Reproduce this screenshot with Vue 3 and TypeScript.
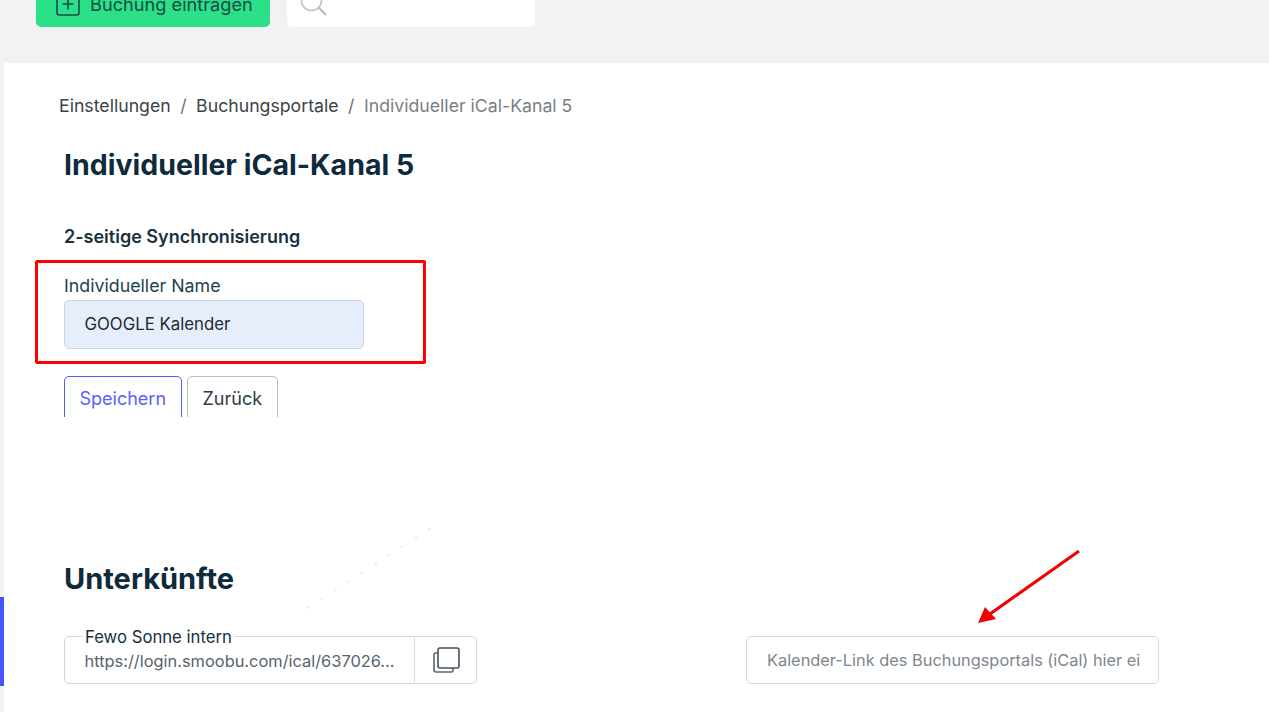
<script setup lang="ts">
const crumbs: string[] = ['Einstellungen', 'Buchungsportale']
const current = 'Individueller iCal-Kanal 5'
</script>

<template>
  <div class="page">
    <aside class="rail"><span class="rail-mark"></span></aside>
    <main class="main">
      <header class="topbar">
        <button class="book" type="button">
          <svg class="book-icon" width="24" height="24" viewBox="0 0 24 24" fill="none">
            <rect x="1" y="1" width="22" height="22" rx="2" stroke="#1c4a45" stroke-width="1.6" />
            <path d="M12 6.5v11M6.500 12h11" stroke="#1c4a45" stroke-width="1.6" />
          </svg>
          <span>Buchung eintragen</span>
        </button>
        <div class="search">
          <svg width="30" height="30" viewBox="0 0 30 30" fill="none">
            <circle cx="12.5" cy="12.5" r="10" stroke="#c4c4c4" stroke-width="1.6" />
            <path d="M20 20l7 7" stroke="#b5b5b5" stroke-width="1.8" />
          </svg>
        </div>
      </header>

      <section class="content">
        <nav class="crumbs">
          <template v-for="c in crumbs" :key="c">
            <span>{{ c }}</span><span class="sep">/</span>
          </template>
          <span class="current">{{ current }}</span>
        </nav>
        <h1 class="title">{{ current }}</h1>
        <h2 class="sub">2-seitige Synchronisierung</h2>

        <div class="redbox">
          <label class="name-label">Individueller Name</label>
          <div class="name-input">GOOGLE Kalender</div>
        </div>

        <div class="actions">
          <button class="btn primary" type="button">Speichern</button>
          <button class="btn" type="button">Zurück</button>
        </div>

        <h2 class="section">Unterkünfte</h2>

        <div class="row">
          <div class="link-field">
            <span class="legend">Fewo Sonne intern</span>
            <span class="url">https://login.smoobu.com/ical/637026...</span>
            <span class="copy">
              <svg width="28" height="28" viewBox="0 0 28 28" fill="none">
                <path d="M6 7H3.500A1.500 1.500 0 0 0 2 8.500V24a2 2 0 0 0 2 2h15.500a1.500 1.500 0 0 0 1.500-1.500V22" stroke="#5b6670" stroke-width="1.600" />
                <rect x="6" y="2" width="21" height="20" rx="2" stroke="#46525c" stroke-width="1.600" />
              </svg>
            </span>
          </div>
          <div class="ical-input">Kalender-Link des Buchungsportals (iCal) hier ei</div>
        </div>
      </section>
    </main>

    <svg class="marks" width="1269" height="712" viewBox="0 0 1269 712" fill="none">
      <path d="M431 528 L297 615" stroke="#f6caca" stroke-width="0.8" stroke-dasharray="4 12" />
      <path d="M1079 551 L990 614" stroke="#f00000" stroke-width="3" />
      <path d="M978 623 L985 607 L996 619 Z" fill="#f00000" />
    </svg>
  </div>
</template>

<style>
html, body { margin: 0; background: #fff; }
</style>

<style scoped>
.page {
  position: relative;
  display: flex;
  width: 1269px;
  height: 712px;
  overflow: hidden;
  background: #fff;
  font-family: Inter, "Liberation Sans", sans-serif;
  color: #1f2d36;
}
.rail {
  flex: 0 0 4px;
  display: flex;
  flex-direction: column;
  padding-top: 597px;
  background: #f2f2f2;
  box-sizing: border-box;
}
.rail-mark { display: block; height: 89px; background: #4353ff; }
.main { flex: 1; min-width: 0; }
.topbar {
  display: flex;
  gap: 17px;
  height: 63px;
  padding-left: 32px;
  background: #f2f2f2;
  box-sizing: border-box;
}
.book {
  display: flex;
  align-items: center;
  gap: 10px;
  height: 47px;
  margin-top: -20px;
  width: 234px;
  padding: 0 0 0 20px;
  border: 0;
  border-radius: 5px;
  background: #2ae089;
  color: #1c4a45;
  font: 400 18.200px Inter, "Liberation Sans", sans-serif;
  box-sizing: border-box;
}
.book-icon { flex: none; }
.search {
  display: flex;
  align-items: flex-start;
  width: 248px;
  height: 47px;
  margin-top: -20px;
  padding: 8px 0 0 12px;
  background: #fff;
  border-radius: 5px;
  box-sizing: border-box;
}
.content { padding: 30px 0 0 31px; }
.crumbs {
  display: flex;
  padding-left: 24px;
  height: 24px;
  align-items: center;
  font-size: 17.700px;
  color: #3b434a;
}
.sep { margin: 0 9.500px; color: #6b7378; }
.current { color: #787f85; }
.title {
  margin: 31px 0 0 29px;
  font-size: 28.500px;
  line-height: 34px;
  font-weight: 700;
  color: #0e2a3b;
}
.sub {
  margin: 44px 0 0 29px;
  font-size: 18px;
  line-height: 22px;
  font-weight: 600;
  color: #1a3140;
}
.redbox {
  width: 391px;
  height: 104px;
  margin-top: 12px;
  padding: 12px 26px 0;
  border: 3px solid #f00;
  border-radius: 2px;
  box-sizing: border-box;
}
.name-label { display: block; font-size: 17.800px; line-height: 22px; color: #25404f; }
.name-input {
  width: 300px;
  height: 49px;
  margin-top: 3px;
  padding: 0 0 2px 19.500px;
  display: flex;
  align-items: center;
  background: #e7eefb;
  border: 1px solid #cdd6e2;
  border-radius: 5px;
  font-size: 16.800px;
  color: #222b30;
  box-sizing: border-box;
}
.actions {
  display: flex;
  gap: 5px;
  height: 41px;
  margin: 12px 0 0 29px;
  overflow: hidden;
}
.btn {
  height: 50px;
  padding: 0 15px 6px;
  background: #fff;
  border: 1px solid #bdbdbd;
  border-radius: 5px;
  font: 400 18px Inter, "Liberation Sans", sans-serif;
  color: #333b40;
  box-sizing: border-box;
}
.primary { padding: 0 14.500px 6px; border-color: #4f5cff; color: #5363ff; }
.section {
  margin: 145px 0 0 29px;
  font-size: 29px;
  line-height: 34px;
  font-weight: 700;
  color: #0e2a3b;
}
.row {
  display: flex;
  gap: 269px;
  margin: 40px 0 0 29px;
}
.link-field {
  position: relative;
  display: flex;
  align-items: center;
  width: 413px;
  height: 48px;
  border: 1px solid #d3d9e1;
  border-radius: 5px;
  box-sizing: border-box;
}
.legend {
  position: absolute;
  left: 18px;
  top: -10px;
  padding: 0 2px;
  background: #fff;
  font-size: 16.700px;
  line-height: 20px;
  color: #13303f;
}
.url {
  flex: 1;
  padding: 0 0 0 19.500px;
  margin-top: 2px;
  font-size: 16.400px;
  color: #56636d;
  white-space: nowrap;
}
.copy {
  flex: 0 0 62px;
  align-self: stretch;
  display: flex;
  align-items: center;
  justify-content: center;
  border-left: 1px solid #d3d9e1;
  box-sizing: border-box;
}
.ical-input {
  width: 413px;
  height: 48px;
  padding-left: 20px;
  display: flex;
  align-items: center;
  border: 1px solid #d3d9e1;
  border-radius: 5px;
  font-size: 16.350px;
  color: #7d868e;
  white-space: nowrap;
  overflow: hidden;
  box-sizing: border-box;
}
.marks { position: absolute; left: 0; top: 0; pointer-events: none; }
</style>
